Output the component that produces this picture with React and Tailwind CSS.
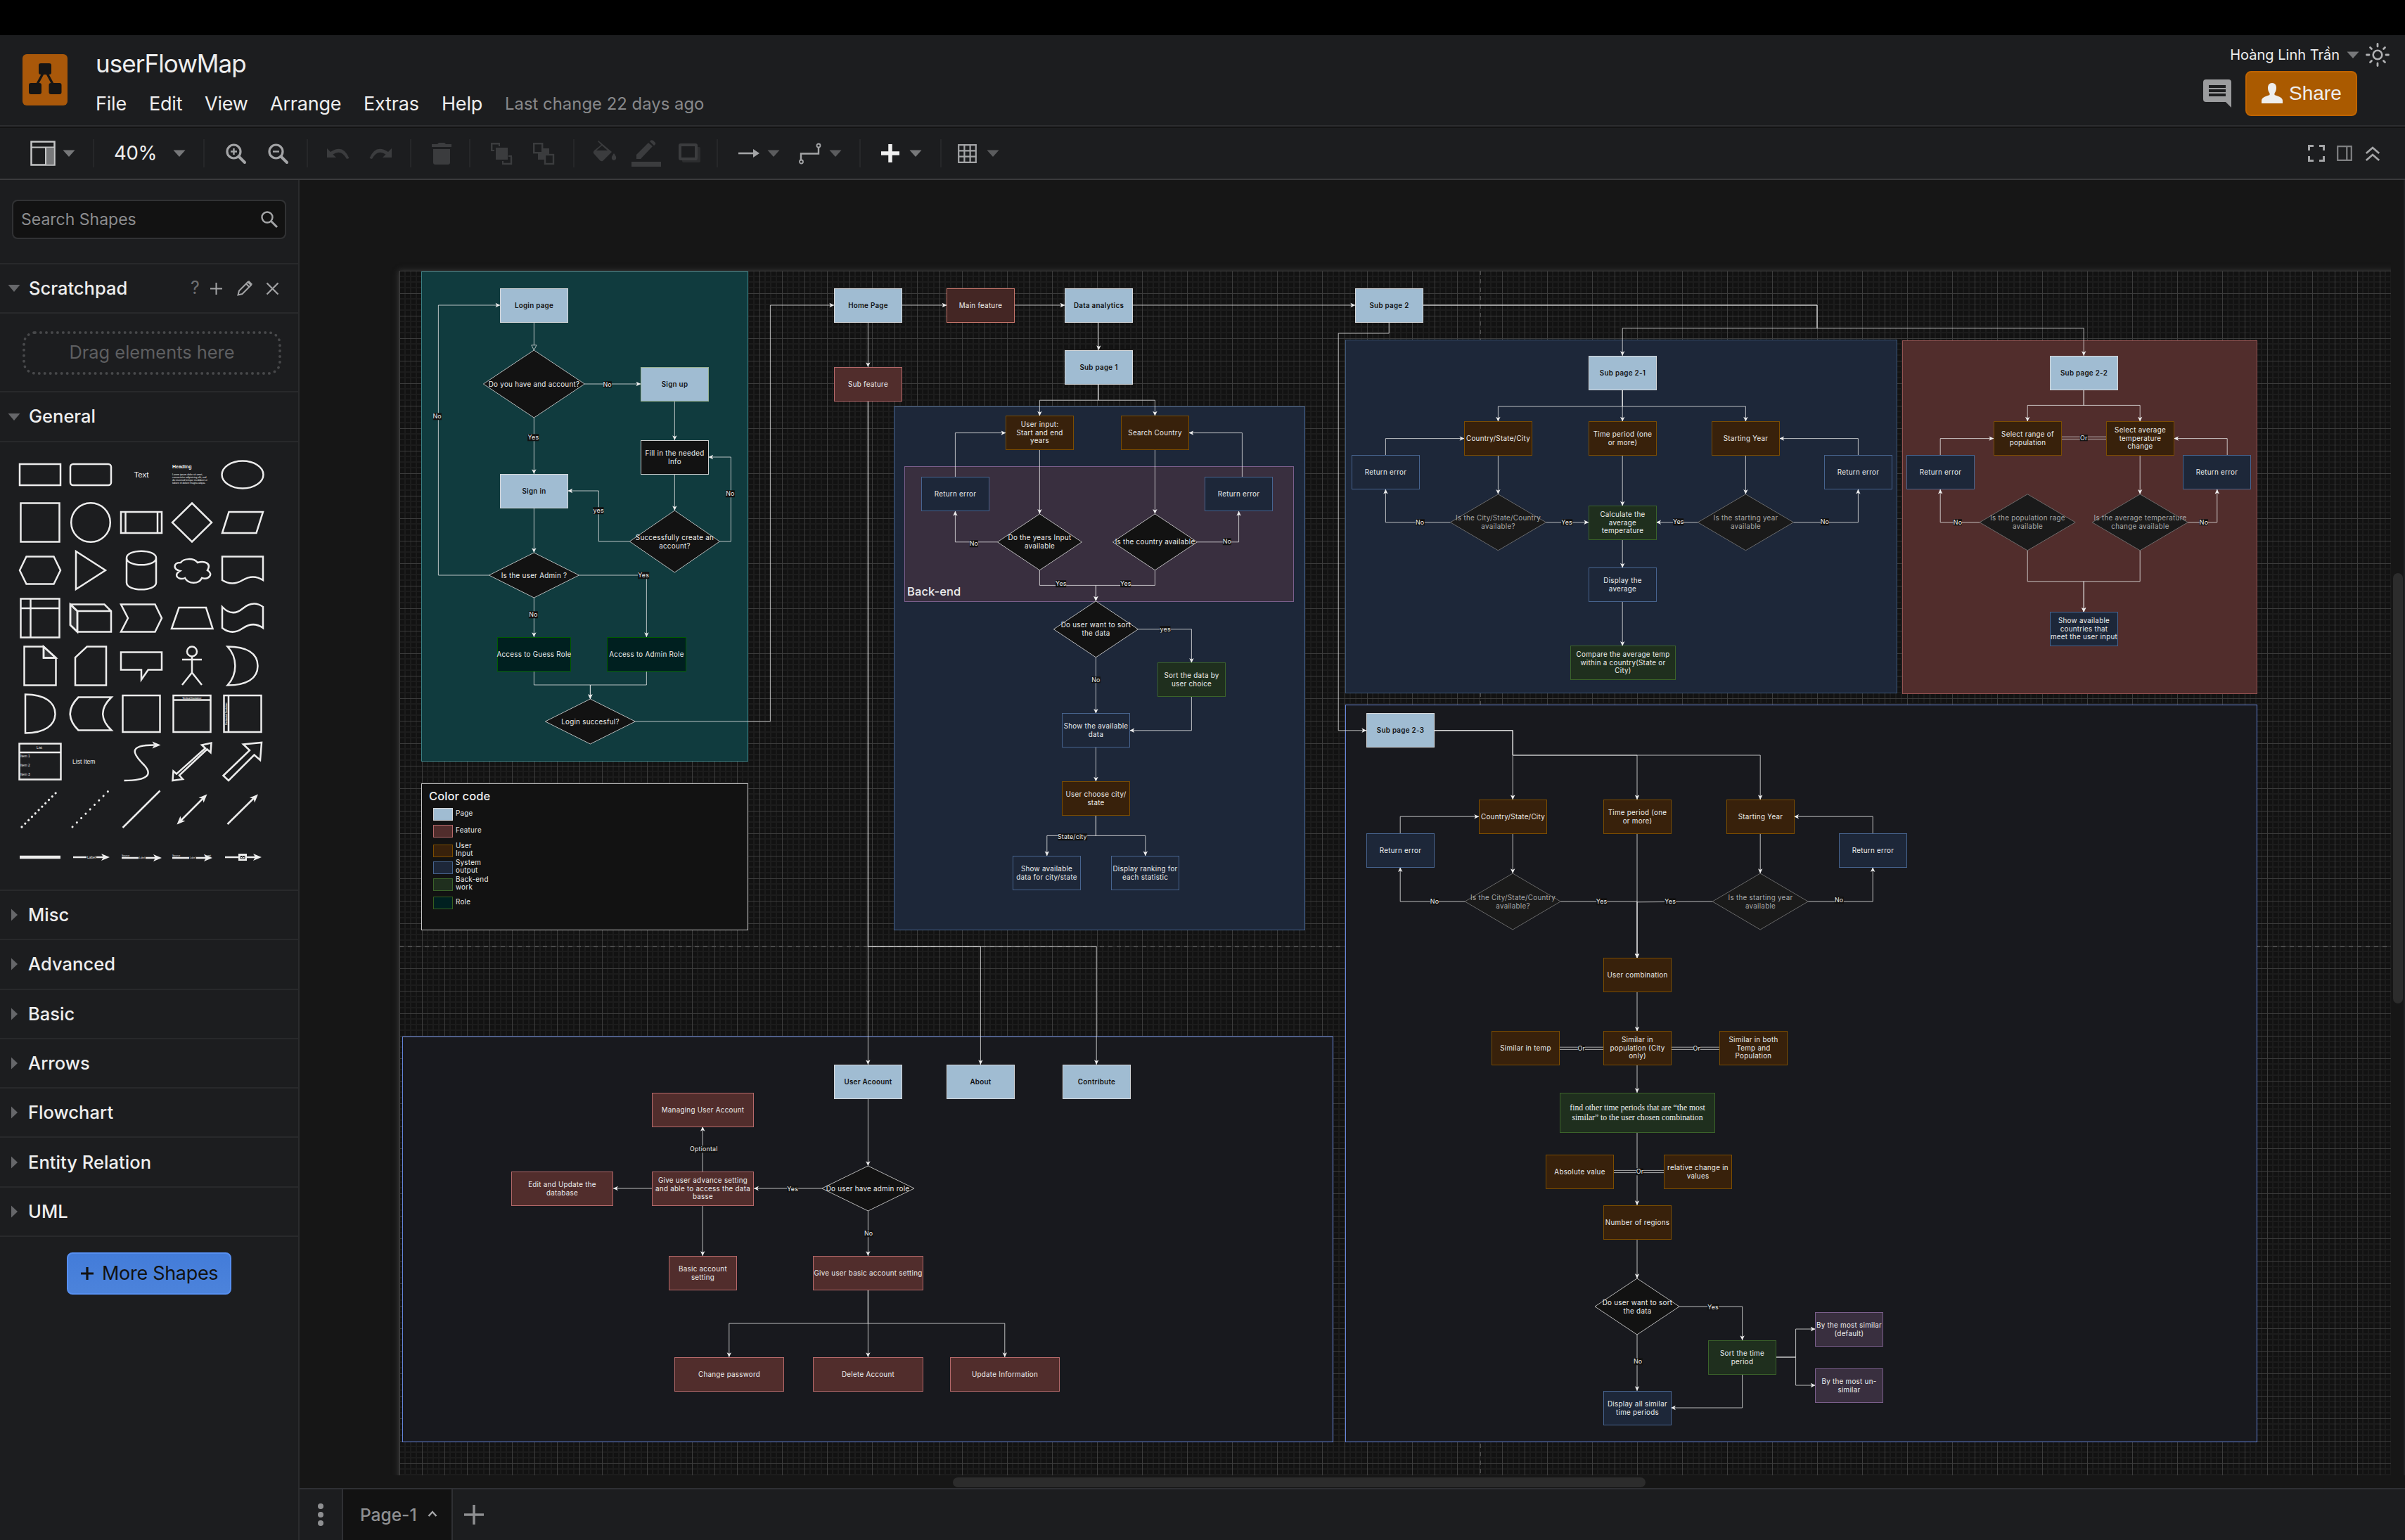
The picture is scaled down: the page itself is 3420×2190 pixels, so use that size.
import React from "react";

const U = 0.8;

const KIND = {
  page: "bg-[#a0bcd2] border-[#d6d9dc] text-[#121212] font-semibold",
  pageGreen: "bg-[#a0bcd2] border-[#97b08f] text-[#121212] font-semibold",
  feature: "bg-[#512d2c] border-[#b5696a] text-[#eeeeee]",
  main: "bg-[#442624] border-[#c9776c] text-[#eeeeee]",
  input: "bg-[#38210b] border-[#7c4d00] text-[#eeeeee]",
  system: "bg-[#1d2739] border-[#47648f] text-[#eeeeee]",
  backend: "bg-[#1f2f1e] border-[#3b632a] text-[#eeeeee]",
  serif: "bg-[#1f2f1e] border-[#3b632a] text-[#eeeeee]",
  role: "bg-[#002020] border-[#005c00] text-[#eeeeee]",
  purple: "bg-[#392f3f] border-[#7b5f8c] text-[#eeeeee]",
  plain: "bg-[#121212] border-[#d0d0d0] text-[#eeeeee]",
};

const SANS_LABEL = "text-[9.8px] leading-[11.5px] tracking-[0.28px]";
const SERIF_LABEL = "font-['Liberation_Serif',serif] text-[11.7px] leading-[14px]";

const PANELS = [
  [39.2, 0, 580, 870, "bg-[#103b3e] border-[#3c8286]"],
  [39.2, 910, 580, 260, "bg-[#121212] border-[#c8c8c8]"],
  [879.5, 240, 730, 930, "bg-[#1d2739] border-[#47648f]"],
  [898, 347, 691, 240, "bg-[#392f3f] border-[#7b5f8c]"],
  [1682, 122, 980, 627, "bg-[#1d2739] border-[#3c5679]"],
  [2672, 123, 630, 628, "bg-[#512d2c] border-[#955453]"],
  [1682, 771, 1620, 1310, "bg-[#18191e] border-[#6585dc]"],
  [6, 1360, 1654, 720, "bg-[#18191e] border-[#6585dc]"],
];

const BOXES = [
  [179.2, 30, 120, 60, "page", "Login page"],
  [429.2, 170, 120, 60, "pageGreen", "Sign up"],
  [429.2, 300, 120, 60, "plain", "Fill in the needed\nInfo"],
  [179.2, 360, 120, 60, "page", "Sign in"],
  [174.2, 650, 130, 60, "role", "Access to Guess Role"],
  [369.2, 650, 140, 60, "role", "Access to Admin Role"],
  [773, 30, 120, 60, "page", "Home Page"],
  [973, 30, 120, 60, "main", "Main feature"],
  [1183, 30, 120, 60, "page", "Data analytics"],
  [1183, 140, 120, 60, "page", "Sub page 1"],
  [773, 170, 120, 60, "feature", "Sub feature"],
  [1078, 257, 120, 60, "input", "User input:\nStart and end\nyears"],
  [1283, 257, 120, 60, "input", "Search Country"],
  [928, 366, 120, 60, "system", "Return error"],
  [1432, 366, 120, 60, "system", "Return error"],
  [1348, 696, 120, 60, "backend", "Sort the data by\nuser choice"],
  [1178, 786, 120, 60, "system", "Show the available\ndata"],
  [1178, 907, 120, 60, "input", "User choose city/\nstate"],
  [1091, 1039, 120, 60, "system", "Show available\ndata for city/state"],
  [1266, 1039, 120, 60, "system", "Display ranking for\neach statistic"],
  [1699, 30, 120, 60, "page", "Sub page 2"],
  [2114, 150, 120, 60, "page", "Sub page 2-1"],
  [1893, 267, 120, 60, "input", "Country/State/City"],
  [2114, 267, 120, 60, "input", "Time period (one\nor more)"],
  [2333, 267, 120, 60, "input", "Starting Year"],
  [1693, 327, 120, 60, "system", "Return error"],
  [2533, 327, 120, 60, "system", "Return error"],
  [2114, 417, 120, 60, "backend", "Calculate the\naverage\ntemperature"],
  [2114, 527, 120, 60, "system", "Display the\naverage"],
  [2081.5, 666, 186, 60, "backend", "Compare the average temp\nwithin a country(State or\nCity)"],
  [2934, 150, 120, 60, "page", "Sub page 2-2"],
  [2834, 267, 120, 60, "input", "Select range of\npopulation"],
  [3034, 267, 120, 60, "input", "Select average\ntemperature\nchange"],
  [2679, 327, 120, 60, "system", "Return error"],
  [3171, 327, 120, 60, "system", "Return error"],
  [2934, 606, 120, 60, "system", "Show available\ncountries that\nmeet the user input"],
  [1719, 786, 120, 60, "page", "Sub page 2-3"],
  [1919, 939, 120, 60, "input", "Country/State/City"],
  [2140, 939, 120, 60, "input", "Time period (one\nor more)"],
  [2359, 939, 120, 60, "input", "Starting Year"],
  [1719, 999, 120, 60, "system", "Return error"],
  [2559, 999, 120, 60, "system", "Return error"],
  [2140, 1221, 120, 60, "input", "User combination"],
  [1942, 1351, 120, 60, "input", "Similar in temp"],
  [2140, 1351, 120, 60, "input", "Similar in\npopulation (City\nonly)"],
  [2347, 1351, 120, 60, "input", "Similar in both\nTemp and\nPopulation"],
  [2063, 1460, 275, 70, "serif", "find other time periods that are “the most\nsimilar” to the user chosen combination"],
  [2038, 1570, 120, 60, "input", "Absolute value"],
  [2248, 1570, 120, 60, "input", "relative change in\nvalues"],
  [2140, 1660, 120, 60, "input", "Number of regions"],
  [2327, 1900, 120, 60, "backend", "Sort the time\nperiod"],
  [2517, 1850, 120, 60, "purple", "By the most similar\n(default)"],
  [2517, 1950, 120, 60, "purple", "By the most un-\nsimilar"],
  [2140, 1990, 120, 60, "system", "Display all similar\ntime periods"],
  [773, 1410, 120, 60, "page", "User Acoount"],
  [973, 1410, 120, 60, "page", "About"],
  [1179, 1410, 120, 60, "page", "Contribute"],
  [449, 1460, 180, 60, "feature", "Managing User Account"],
  [199, 1600, 180, 60, "feature", "Edit and Update the\ndatabase"],
  [449, 1600, 180, 60, "feature", "Give user advance setting\nand able to access the data\nbasse"],
  [479, 1750, 120, 60, "feature", "Basic account\nsetting"],
  [736, 1750, 195, 60, "feature", "Give user basic account setting"],
  [489, 1930, 194, 60, "feature", "Change password"],
  [736, 1930, 195, 60, "feature", "Delete Account"],
  [979, 1930, 194, 60, "feature", "Update Information"],
];

// [x, y, w, h, text, dimmed]
const DIAMONDS = [
  [149.2, 140, 180, 120, "Do you have and account?"],
  [409.2, 425, 160, 110, "Successfully create an\naccount?"],
  [159.2, 500, 160, 80, "Is the user Admin ?"],
  [259.2, 760, 160, 80, "Login succesful?"],
  [1063, 431, 150, 100, "Do the years Input\navailable"],
  [1268, 431, 150, 100, "Is the country available"],
  [1163, 586, 150, 100, "Do user want to sort\nthe data"],
  [1868, 396, 170, 100, "Is the City/State/Country\navailable?", true],
  [2308, 396, 170, 100, "Is the starting year\navailable", true],
  [2809, 396, 170, 100, "Is the population rage\navailable", true],
  [3009, 396, 170, 100, "Is the average temperature\nchange available", true],
  [1894, 1070, 170, 100, "Is the City/State/Country\navailable?", true],
  [2334, 1070, 170, 100, "Is the starting year\navailable", true],
  [2125, 1790, 150, 100, "Do user want to sort\nthe data"],
  [751, 1590, 164, 80, "Do user have admin role"],
];

const LOGIN_ARROWS = [
  "330,200 430,200", "490,230 490,300", "240,260 240,360", "490,360 490,425",
  "570,480 590,480 590,330 550,330", "410,480 355,480 355,390 300,390", "240,420 240,500",
  "160,540 70,540 70,60 180,60", "320,540 440,540 440,650", "240,580 240,650",
  "240,710 240,735 340,735 340,760", "440,710 440,735 340,735 340,760",
  "420,800 660,800 660,60 773.5,60",
];

const ARROWS = [
  "893,60 973,60", "1093,60 1183,60", "833,90 833,170", "1243,90 1243,140",
  "1243,200 1243,229 1138,229 1138,257", "1243,200 1243,229 1343,229 1343,257",
  "1303,60 1699,60", "1138,317 1138,431", "1343,317 1343,431",
  "988,366 988,287 1078,287", "1498,366 1498,287 1403,287",
  "1063,481 988,481 988,426", "1418,481 1492,481 1492,426",
  "1138,531 1138,558 1238,558 1238,586", "1343,531 1343,558 1238,558 1238,586",
  "1313,636 1408,636 1408,696", "1238,686 1238,786", "1408,756 1408,816 1298,816",
  "1238,846 1238,907", "1238,967 1238,1003 1151,1003 1151,1039", "1238,967 1238,1003 1326,1003 1326,1039",
  "1819,60 2520,60 2520,101 2174,101 2174,150", "1819,60 2520,60 2520,101 2994,101 2994,150",
  "1759,90 1759,110 1669,110 1669,816 1719,816",
  "2174,210 2174,240 1953,240 1953,267", "2174,210 2174,267", "2174,210 2174,240 2393,240 2393,267",
  "1753,327 1753,297 1893,297", "2593,327 2593,297 2453,297",
  "1868,446 1753,446 1753,387", "2038,446 2114,446", "2308,446 2234,446", "2478,446 2593,446 2593,387",
  "1953,327 1953,396", "2393,327 2393,396", "2174,327 2174,417", "2174,477 2174,527", "2174,587 2174,666",
  "2994,210 2994,238 2894,238 2894,267", "2994,210 2994,238 3094,238 3094,267",
  "2739,327 2739,297 2834,297", "3249,327 3249,297 3154,297",
  "2809,446 2739,446 2739,387", "3179,446 3231,446 3231,387", "3094,327 3094,396",
  "2894,496 2894,551 2994,551 2994,606", "3094,496 3094,551 2994,551 2994,606",
  "1839,816 1979,816 1979,939", "1839,816 1979,816 1979,860 2200,860 2200,939", "1839,816 1979,816 1979,860 2419,860 2419,939",
  "1779,999 1779,969 1919,969", "2619,999 2619,969 2479,969",
  "1894,1120 1779,1120 1779,1059", "2504,1120 2619,1120 2619,1059",
  "1979,999 1979,1070", "2419,999 2419,1070",
  "2064,1120 2200,1120 2200,1221", "2334,1120 2200,1121 2200,1221", "2200,999 2200,1221",
  "2200,1281 2200,1351", "2200,1411 2200,1460", "2200,1530 2200,1660", "2200,1720 2200,1790",
  "2275,1840 2387,1840 2387,1900", "2200,1890 2200,1990", "2387,1960 2387,2020 2260,2020",
  "2447,1930 2482,1930 2482,1880 2517,1880", "2447,1930 2482,1930 2482,1980 2517,1980",
  "833,230 833,1410", "833,230 833,1200 1033,1200 1033,1410", "833,230 833,1200 1239,1200 1239,1410",
  "833,1470 833,1590", "751,1630 630,1630", "449,1630 380,1630", "539,1600 539,1520", "539,1660 539,1750",
  "833,1670 833,1750", "833,1810 833,1930", "833,1810 833,1870 586,1870 586,1930", "833,1810 833,1870 1076,1870 1076,1930",
];

const DOUBLE_LINKS = [
  [2954, 3034, 296], [2061, 2140, 1381], [2260, 2346, 1381], [2158, 2248, 1600],
];

const LABELS = [
  [369.5, 201, "No"], [238, 295, "Yes"], [588, 395, "No"], [354, 425, "yes"], [67, 258, "No"], [434, 540, "Yes"], [238, 610, "No"],
  [1021, 484, "No"], [1471, 480, "No"], [1176, 555, "Yes"], [1291, 555, "Yes"], [1361.5, 636, "yes"], [1238, 726, "No"], [1196, 1005, "State/city"],
  [1814, 446, "No"], [2075, 446, "Yes"], [2273.5, 445, "Yes"], [2533.5, 445, "No"],
  [2994, 296, "Or"], [2770, 446, "No"], [3207.5, 446, "No"],
  [1840, 1120, "No"], [2559, 1118, "No"], [2137, 1120, "Yes"], [2259, 1120, "Yes"], [2101, 1381, "Or"], [2306, 1381, "Or"],
  [2205, 1600, "Or"], [2335, 1841, "Yes"], [2201.5, 1937.5, "No"],
  [699, 1631, "Yes"], [541, 1560, "Optiontal"], [834, 1710, "No"],
];

const LEGEND = [
  [954, "bg-[#a0bcd2] border-[#d6d9dc]", "Page"],
  [984, "bg-[#512d2c] border-[#b5696a]", "Feature"],
  [1019, "bg-[#38210b] border-[#7c4d00]", "User\nInput"],
  [1049, "bg-[#1d2739] border-[#47648f]", "System\noutput"],
  [1079, "bg-[#1f2f1e] border-[#3b632a]", "Back-end\nwork"],
  [1112, "bg-[#002020] border-[#35601f]", "Role"],
];

const place = (x, y, w, h) => ({
  left: Math.round(x * U - 0.5),
  top: Math.round(y * U - 0.5),
  width: Math.round(w * U) + 1,
  height: Math.round(h * U) + 1,
});

function Grid() {
  return (
    <svg className="absolute left-0 -top-px" width="2832" height="1713">
      <defs>
        <pattern id="grid" width="32" height="32" patternUnits="userSpaceOnUse">
          <path d="M0 8H32M0 16H32M0 24H32M8 0V32M16 0V32M24 0V32" stroke="#1c1c1c" strokeWidth="2" />
          <path d="M0 .5H32M.5 0V32" stroke="#3c3c3c" strokeWidth="1" />
        </pattern>
      </defs>
      <rect width="2832" height="1713" fill="url(#grid)" />
      <path d="M1537 0V1713M0 961H2832" stroke="#4a4a4a" strokeWidth="2" strokeDasharray="6 6" />
    </svg>
  );
}

function Diagram() {
  return (
    <div className="absolute left-[142px] top-[130px] h-[1712px] w-[2832px]">
      <div className="absolute -left-px -top-px h-[1800px] w-[2900px] border border-[#303030] bg-[#121212] shadow-[0_0_8px_#3a3a3a]" />
      <Grid />
      {PANELS.map(([x, y, w, h, c], i) => (
        <div key={i} className={`absolute border ${c}`} style={place(x, y, w, h)} />
      ))}
      <div className="absolute left-[42px] top-[734px] text-[16.5px] leading-[24px] font-medium tracking-[0.1px]">Color code</div>
      <div className="absolute left-[722px] top-[443px] text-[16.5px] leading-[24px] font-medium tracking-[0.1px]">Back-end</div>
      {LEGEND.map(([y, c, t]) => (
        <React.Fragment key={t}>
          <div className={`absolute border ${c}`} style={place(60.8, y, 34, 21)} />
          <div
            className={`absolute left-[80px] flex h-[24px] -translate-y-1/2 items-center whitespace-pre ${SANS_LABEL}`}
            style={{ top: (y + 9) * U }}
          >
            {t}
          </div>
        </React.Fragment>
      ))}
      <svg className="absolute left-0 top-0" width="2832" height="1712" viewBox="0 0 3540 2140" fill="none">
        <defs>
          <marker id="head" markerUnits="userSpaceOnUse" markerWidth="12" markerHeight="12" refX="9" refY="6" orient="auto">
            <path d="M9 6L0.5 2L2.6 6L0.5 10Z" fill="#eeeeee" />
          </marker>
          <marker id="open" markerUnits="userSpaceOnUse" markerWidth="14" markerHeight="14" refX="11" refY="7" orient="auto">
            <path d="M11 7L2 2.5V11.5Z" fill="#103b3e" stroke="#dddddd" strokeWidth="1" />
          </marker>
        </defs>
        <g transform="translate(-0.8 0)" stroke="#e6e6e6">
          {LOGIN_ARROWS.map((p) => (
            <polyline key={p} points={p} markerEnd="url(#head)" />
          ))}
          <polyline points="240,90 240,140" markerEnd="url(#open)" />
        </g>
        {ARROWS.map((p) => (
          <polyline key={p} points={p} stroke="#e6e6e6" markerEnd="url(#head)" />
        ))}
        {DOUBLE_LINKS.map(([a, b, y]) => (
          <path key={a} d={`M${a} ${y - 2}H${b}M${a} ${y + 2}H${b}`} stroke="#d0d0d0" />
        ))}
        {DIAMONDS.map(([x, y, w, h, , dim], i) => (
          <polygon
            key={i}
            points={`${x},${y + h / 2} ${x + w / 2},${y} ${x + w},${y + h / 2} ${x + w / 2},${y + h}`}
            fill={dim ? "#1a1a1a" : "#121212"}
            stroke={dim ? "#7c7c7c" : "#e0e0e0"}
          />
        ))}
      </svg>
      {BOXES.map(([x, y, w, h, k, t], i) => (
        <div
          key={i}
          className={`absolute flex items-center justify-center whitespace-pre border text-center ${k === "serif" ? SERIF_LABEL : SANS_LABEL} ${KIND[k]}`}
          style={place(x, y, w, h)}
        >
          {t}
        </div>
      ))}
      {DIAMONDS.map(([x, y, w, h, t, dim], i) => (
        <div
          key={i}
          className={`absolute flex items-center justify-center whitespace-pre text-center ${SANS_LABEL} ${dim ? "text-[#a9a9a9]" : "text-[#eeeeee]"}`}
          style={place(x, y, w, h)}
        >
          {t}
        </div>
      ))}
      {LABELS.map(([x, y, t], i) => (
        <div
          key={i}
          className="absolute -translate-x-1/2 -translate-y-1/2 bg-[#121212] text-[8.8px] leading-[9.5px] tracking-[0.2px]"
          style={{ left: x * U, top: y * U }}
        >
          {t}
        </div>
      ))}
    </div>
  );
}

function Caret({ className = "" }) {
  return (
    <svg className={`shrink-0 ${className}`} width="18" height="10" viewBox="0 0 18 10">
      <path d="M0.5 0.5H17.5L9 10Z" fill="#77787a" />
    </svg>
  );
}

const Sep = ({ className = "" }) => <div className={`h-10 w-0.5 shrink-0 bg-[#262729] ${className}`} />;

function Icon({ w, h, className = "", children, color = "#a4a5a7" }) {
  return (
    <svg className={`shrink-0 overflow-visible ${className}`} width={w} height={h} viewBox={`0 0 ${w} ${h}`} fill="none" stroke={color}>
      {children}
    </svg>
  );
}

const DIM = "#3b3c3e";

function Header() {
  return (
    <header className="flex h-[130px] shrink-0 border-b-2 border-[#2c2d2f]">
      <svg className="ml-8 mt-[27px] shrink-0" width="64" height="73" viewBox="0 0 64 73">
        <rect width="64" height="73" rx="6" fill="#a9580a" />
        <path d="M32 22L18 48M32 22L46 48" stroke="#151515" strokeWidth="3.4" />
        <rect x="23" y="13" width="18" height="16" rx="3" fill="#151515" />
        <rect x="9" y="41" width="18" height="16" rx="3" fill="#151515" />
        <rect x="37.5" y="41" width="18" height="16" rx="3" fill="#151515" />
      </svg>
      <div className="ml-10 flex flex-col">
        <div className="mt-[18px] h-11 text-[35px] leading-[44px] tracking-[-0.95px]">userFlowMap</div>
        <nav className="mt-[18px] flex h-9 items-center text-[27px] leading-9 tracking-[-0.2px]">
          <span className="w-[76px]">File</span>
          <span className="w-[79px]">Edit</span>
          <span className="w-[93px]">View</span>
          <span className="w-[133px]">Arrange</span>
          <span className="w-[111px]">Extras</span>
          <span className="w-[90px]">Help</span>
          <span className="whitespace-nowrap text-[23.8px] tracking-[0.05px] text-[#88898b]">Last change 22 days ago</span>
        </nav>
      </div>
      <div className="ml-auto flex flex-col items-end">
        <div className="mr-[22px] mt-2.5 flex h-9 items-center">
          <span className="text-[20px] leading-9">Hoàng Linh Trần</span>
          <Caret className="ml-2.5" />
          <Icon w="34" h="34" className="ml-[9px]" color="#b0b1b3">
            <circle cx="17" cy="17" r="6.3" strokeWidth="2.6" />
            <path strokeWidth="2.8" strokeLinecap="round" d="M17 1.5V5M17 29V32.5M1.5 17H5M29 17H32.5M6.5 6.5L8.5 8.5M25.5 25.5L27.5 27.5M6.5 27.5L8.5 25.5M25.5 8.5L27.5 6.5" />
          </Icon>
        </div>
        <div className="mr-[68px] mt-[5px] flex items-center">
          <svg className="mr-5" width="40" height="40" viewBox="0 0 40 40">
            <path fillRule="evenodd" fill="#9b9c9e" d="M4 0H36Q40 0 40 4V40L32 32H4Q0 32 0 28V4Q0 0 4 0ZM8 8V12H32V8ZM8 14V18H32V14ZM8 20V24H32V20Z" />
          </svg>
          <button className="flex h-16 w-[159px] items-center rounded-lg border-2 border-[#bf6400] bg-[#aa5a00] pl-[21px] font-['Liberation_Sans',sans-serif] text-[28px] text-[#eeeeee]">
            <svg className="mr-[9px]" width="30" height="30" viewBox="0 0 30 30">
              <path fill="#eeeeee" d="M15 0C19 0 21 3 21 7C21 10 20 12.5 18.5 14.5V17C21 18.5 30 19.5 30 25V29H0V25C0 19.5 9 18.5 11.5 17V14.5C10 12.5 9 10 9 7C9 3 11 0 15 0Z" />
            </svg>
            Share
          </button>
        </div>
      </div>
    </header>
  );
}

function Toolbar() {
  return (
    <div className="flex h-[76px] shrink-0 items-center border-b-2 border-t-2 border-b-[#3a3a3c] border-t-[#131313]">
      <Icon w="36" h="36" className="ml-[43px]" color="#c4c5c6">
        <rect x="1.5" y="1.5" width="33" height="33" strokeWidth="2.5" />
        <path d="M1.5 9.5H34.5" strokeWidth="2" />
        <rect x="22.5" y="10" width="11" height="24" fill="#77787a" stroke="none" />
        <path d="M22 9.5V34.5" strokeWidth="2" />
      </Icon>
      <Caret className="ml-2.5" />
      <Sep className="ml-[25px]" />
      <span className="ml-[28px] w-[84px] text-[27.5px] tracking-[-0.3px]">40%</span>
      <Caret />
      <Sep className="ml-[25px]" />
      <Icon w="29" h="29" className="ml-[30px]">
        <circle cx="11.5" cy="11.5" r="9.5" strokeWidth="3.2" />
        <path d="M18.5 18.5L27 27" strokeWidth="4" strokeLinecap="round" />
        <path d="M11.5 7V16M7 11.5H16" strokeWidth="2.4" />
      </Icon>
      <Icon w="29" h="29" className="ml-[31px]">
        <circle cx="11.5" cy="11.5" r="9.5" strokeWidth="3.2" />
        <path d="M18.5 18.5L27 27" strokeWidth="4" strokeLinecap="round" />
        <path d="M7 11.5H16" strokeWidth="2.4" />
      </Icon>
      <Sep className="ml-[26px]" />
      <Icon w="32" h="17" className="ml-[27px]" color={DIM}>
        <path d="M0 1V14H13L8.5 9.5Q20 1.5 28 16L31.5 15Q23 -6 5 6Z" fill={DIM} stroke="none" />
      </Icon>
      <Icon w="32" h="17" className="ml-7" color={DIM}>
        <path d="M32 1V14H19L23.5 9.5Q12 1.5 4 16L0.5 15Q9 -6 27 6Z" fill={DIM} stroke="none" />
      </Icon>
      <Sep className="ml-[26px]" />
      <Icon w="28" h="31" className="ml-[29px]" color={DIM}>
        <path d="M0 2H8L10 0H18L20 2H28V6H0ZM2 9H26V28Q26 31 23 31H5Q2 31 2 28Z" fill={DIM} stroke="none" />
      </Icon>
      <Sep className="ml-[25px]" />
      <Icon w="30" h="31" className="ml-[29px]" color={DIM}>
        <rect x="7" y="7" width="17" height="17" fill={DIM} stroke="none" />
        <path d="M1.2 11V1.2H12M29 20V30H18" strokeWidth="2.4" />
        <path d="M0 11H5M12 0V5M30 19H25M17 31V26" strokeWidth="2" />
      </Icon>
      <Icon w="30" h="31" className="ml-[30px]" color={DIM}>
        <rect x="7" y="8" width="16" height="16" fill={DIM} stroke="none" />
        <rect x="1.2" y="1.2" width="12" height="13" fill="#1c1d1f" strokeWidth="2.4" />
        <rect x="17" y="17" width="12" height="13" fill="#1c1d1f" strokeWidth="2.4" />
      </Icon>
      <Sep className="ml-[27px]" />
      <Icon w="34" h="30" className="-mt-1.5 ml-[26px]" color={DIM}>
        <path d="M8 0L27 16L14 29Q12 30 10 28L1 18Q0 16 2 14L12 6L7 1ZM30 18Q34 23 33 26Q30 30 27 26Q26 23 30 18Z" fill={DIM} stroke="none" />
        <path d="M5 14L13 7L21 14Z" fill="#1c1d1f" stroke="none" />
      </Icon>
      <Icon w="42" h="38" className="ml-[21px]" color={DIM}>
        <path d="M7 21L24 4L30 9L13 27H7ZM26 2Q28 -1 31 1L34 4Q35 6 32 8Z" fill={DIM} stroke="none" />
        <rect x="0" y="31" width="42" height="7" fill={DIM} stroke="none" />
      </Icon>
      <Icon w="32" h="28" className="ml-[25px]" color={DIM}>
        <rect x="5" y="5" width="26" height="22" rx="2" fill="#2c2d2f" stroke="none" />
        <rect x="2" y="2" width="23" height="20" rx="1" strokeWidth="4" fill="#1c1d1f" />
      </Icon>
      <Sep className="ml-[22px]" />
      <Icon w="30" h="12" className="ml-[29px]">
        <path d="M0 6H24" strokeWidth="2.6" />
        <path d="M21 0L30 6L21 12Z" fill="#a4a5a7" stroke="none" />
      </Icon>
      <Caret className="ml-[11px] opacity-70" />
      <Icon w="32" h="31" className="ml-[27px]">
        <path d="M3 24V15.5H28V7" strokeWidth="2.4" />
        <circle cx="3.5" cy="27" r="2.5" strokeWidth="1.8" />
        <circle cx="28" cy="4" r="2.5" strokeWidth="1.8" />
      </Icon>
      <Caret className="ml-[11px] opacity-70" />
      <Sep className="ml-[25px]" />
      <Icon w="26" h="26" className="ml-[29px]" color="#f0f0f0">
        <path d="M13 0V26M0 13H26" strokeWidth="5.5" />
      </Icon>
      <Caret className="ml-[14px]" />
      <Sep className="ml-[26px]" />
      <Icon w="27" h="27" className="ml-[23px]">
        <path d="M1.2 1.2H25.8V25.8H1.2ZM1.2 9.4H25.8M1.2 17.6H25.8M9.4 1.2V25.8M17.6 1.2V25.8" strokeWidth="2.2" />
      </Icon>
      <Caret className="ml-[14px] opacity-70" />
      <div className="ml-auto mr-9 flex items-center">
        <Icon w="24" h="24">
          <path d="M1.5 8V1.5H8M16 1.5H22.5V8M22.5 16V22.5H16M8 22.5H1.5V16" strokeWidth="3" />
        </Icon>
        <Icon w="22" h="22" className="ml-[17px]" color="#808183">
          <path d="M1.2 1.2H20.8V20.8H1.2ZM14.3 1.2V20.8" strokeWidth="2.2" />
        </Icon>
        <Icon w="20" h="21" className="ml-[19px]">
          <path d="M0.8 10L10 2L19.2 10M0.8 20L10 12L19.2 20" strokeWidth="2.8" />
        </Icon>
      </div>
    </div>
  );
}

const T = ({ x, y, s = 3.5, children, ...r }) => (
  <text x={x} y={y} fontSize={s} fill="#eeeeee" stroke="none" fontFamily="Liberation Sans, sans-serif" {...r}>
    {children}
  </text>
);
const Head = ({ x, y, a = 0 }) => (
  <path transform={`translate(${x} ${y}) rotate(${a})`} d="M0 0L-12 -5L-9 0L-12 5Z" fill="#eeeeee" stroke="none" />
);

const SHAPES = [
  <rect x="-29" y="-15" width="58" height="30" />,
  <rect x="-29" y="-15" width="58" height="30" rx="4" />,
  <T x="0" y="4" s={11.5} textAnchor="middle">Text</T>,
  <g>
    <T x="-28" y="-9" s={7} fontWeight="bold">Heading</T>
    <T x="-28" y="0.8">Lorem ipsum dolor sit amet,</T>
    <T x="-28" y="4.6">consectetur adipisicing elit, sed</T>
    <T x="-28" y="8.6">do eiusmod tempor incididunt ut</T>
    <T x="-28" y="12.8">labore et dolore magna aliqua.</T>
  </g>,
  <ellipse rx="29.5" ry="19.5" />,
  <rect x="-27.5" y="-27.5" width="55" height="55" />,
  <circle r="27.8" />,
  <path d="M-29 -15H29V15H-29ZM-22.5 -15V15M23 -15V15" />,
  <path d="M0 -27.5L28 0L0 27.5L-28 0Z" />,
  <path d="M-29 15L-19.5 -15H29L19.5 15Z" />,
  <path d="M-29 0L-19.5 -19.5H19.5L29 0L19.5 19.5H-19.5Z" />,
  <path d="M-21 -27L21 0L-21 27Z" />,
  <path d="M-21 -17.5C-21 -30.5 21 -30.5 21 -17.5V17.5C21 30.5 -21 30.5 -21 17.5ZM-21 -17.5C-21 -4.5 21 -4.5 21 -17.5" />,
  <path d="M-16 -11C-26 -11 -28 -2 -17 1C-28 7 -18 15 -10 11C-5 20 10 20 14 11C24 14 31 5 22 0C28 -10 18 -14 8 -11C2 -18 -12 -17 -16 -11Z" />,
  <path d="M-29 -19.5H29V14Q15 5 0 14T-29 14Z" />,
  <path d="M-27.5 -27.5H27.5V27.5H-27.5ZM-27.5 -14H27.5M-13.5 -27.5V27.5" />,
  <g>
    <path d="M-29 -19.5L-19 -10V19.5L-29 10Z" fill="#333436" />
    <path d="M-29 -19.5H19.5L29 -10V19.5H-19L-29 10ZM-29 -19.5L-19 -10H29M-19 -10V19.5" />
  </g>,
  <path d="M-29 -19.5H19.5L29 0L19.5 19.5H-29L-19 0Z" />,
  <path d="M-29 15L-18.5 -15H20L29.5 15Z" />,
  <path d="M-29 -16Q-15 -1 0 -13.5T29 -16V14Q15 4 0 14.5T-29 14Z" />,
  <g>
    <path d="M5 -27.5V-11.5H22.5Z" fill="#333436" />
    <path d="M-22.5 -27.5H5L22.5 -11.5V27.5H-22.5ZM5 -27.5V-11.5H22.5" />
  </g>,
  <path d="M-5.3 -27.5H22V27.5H-22V-12Z" />,
  <path d="M-29 -19.5H29V5.5H9.7L0 19.5V5.5H-29Z" />,
  <g>
    <circle cy="-20.5" r="7" />
    <path d="M0 -13.5V9.5M-14 -9H14M-14 27L0 9.5L14 27" />
  </g>,
  <path d="M-21.5 -27.5C6 -27.5 21.5 -18 21.5 0C21.5 18 6 27.5 -21.5 27.5C-7 12 -7 -12 -21.5 -27.5Z" />,
  <path d="M-21 -27.5C7 -27.5 21.5 -16 21.5 0C21.5 16 7 27.5 -21 27.5Z" />,
  <path d="M-17.5 -23.5H29.5Q5 0 29.5 23.5H-17.5Q-41 0 -17.5 -23.5Z" />,
  <rect x="-26.5" y="-26" width="53" height="52" />,
  <g>
    <path d="M-26.5 -26H26.5V26H-26.5ZM-26.5 -19.5H26.5" />
    <T x="0" y="-21.5" s={3.2} fontWeight="bold" textAnchor="middle">Vertical Container</T>
  </g>,
  <g>
    <path d="M-26.5 -26H26.5V26H-26.5ZM-20 -26V26" />
    <T x="0" y="-22" s={3.2} fontWeight="bold" textAnchor="middle" transform="rotate(-90)">Horizontal Container</T>
  </g>,
  <g>
    <path d="M-29.5 -25.5H29.5V25.5H-29.5ZM-29.5 -13H29.5" />
    <T x="-1" y="-18" s={5} textAnchor="middle">List</T>
    <T x="-28" y="-6.5" s={5}>Item 1</T>
    <T x="-28" y="6.5" s={5}>Item 2</T>
    <T x="-28" y="19.5" s={5}>Item 3</T>
  </g>,
  <T x="-26" y="3" s={8.6}>List Item</T>,
  <g>
    <path d="M-24.5 27C10 27 16 18 4 5C-12 -11 -20 -23.5 18 -23.5" />
    <Head x={27.5} y={-23.5} />
  </g>,
  <path d="M-27.5 27L-26.5 13.5L-22 17.5L19 -19L14 -23.5L27.5 -26.5L26.5 -13L21.5 -17.5L-18 19.5L-13 25Z" />,
  <path d="M-27.5 20L10 -16L1 -24.5L27 -27L25 -2L16.5 -9.5L-20 27Z" />,
  <path d="M-26 25L24.5 -25.5" strokeWidth="3.2" strokeDasharray="0.1 6.7" strokeLinecap="round" />,
  <path d="M-26 25L24.5 -25.5" strokeWidth="3" strokeDasharray="0.1 8.8" strokeLinecap="round" />,
  <path d="M-26.5 26L26.5 -26.5" />,
  <g>
    <path d="M-17 17L17 -17" />
    <Head x={21.5} y={-21.5} a={-45} />
    <Head x={-21.5} y={21.5} a={135} />
  </g>,
  <g>
    <path d="M-21.5 21L17 -17" />
    <Head x={22} y={-21.5} a={-45} />
  </g>,
  <path d="M-29 0H29" strokeWidth="4.5" />,
  <g>
    <path d="M-25 0H-6M8 0H19" />
    <T x="1" y="2" s={5} textAnchor="middle">Label</T>
    <Head x={27} y={0} />
  </g>,
  <g>
    <path d="M-28 1H-4M6 1H22" />
    <T x="-28" y="-1">Source</T>
    <T x="1" y="2" textAnchor="middle">Label</T>
    <Head x={29} y={1} />
  </g>,
  <g>
    <path d="M-28 1H-4M6 1H22" />
    <T x="-28" y="-1">Source</T>
    <T x="1" y="2" textAnchor="middle">Label</T>
    <T x="27" y="-1" textAnchor="end">Target</T>
    <Head x={29} y={1} />
  </g>,
  <g>
    <path d="M-25 0H19" />
    <rect x="-6" y="-5" width="12" height="10" fill="#eeeeee" stroke="none" />
    <path d="M-3 -1.5H3V2H-3ZM-3 -1.5L0 0.5L3 -1.5" stroke="#1c1d1f" strokeWidth="1" />
    <Head x={27} y={0} />
  </g>,
];

function Tri({ open }) {
  return (
    <svg className="shrink-0" width="18" height="18" viewBox="0 0 18 18">
      <path d={open ? "M0.5 4H17.5L9 14Z" : "M5 0.5L14 9L5 17.5Z"} fill="#66676a" />
    </svg>
  );
}

function Sidebar() {
  return (
    <aside className="flex w-[426px] shrink-0 flex-col border-r-2 border-[#2a2b2d]">
      <div className="flex h-[120px] flex-col border-b-2 border-[#28292b] px-[17px] pt-7">
        <div className="flex h-14 items-center rounded-lg border-2 border-[#313234] bg-[#121212] pl-[11px] pr-2.5">
          <span className="text-[23px] text-[#8b8c8e]">Search Shapes</span>
          <Icon w="24" h="24" className="ml-auto">
            <circle cx="9" cy="9" r="7.5" strokeWidth="2.4" />
            <path d="M14.5 14.5L23 23" strokeWidth="3" />
          </Icon>
        </div>
      </div>
      <div className="flex h-[70px] items-center border-b-2 border-[#28292b] pl-[11px] text-[25.5px] font-medium">
        <Tri open />
        <span className="ml-3 w-[230px]">Scratchpad</span>
        <span className="w-7 text-[25px] font-normal text-[#6e6f71]">?</span>
        <Icon w="17" h="17">
          <path d="M8.5 0V17M0 8.5H17" strokeWidth="2" />
        </Icon>
        <Icon w="22" h="22" className="ml-[21px]">
          <path d="M1.5 20.5L3 14.5L15.5 2L20 6.5L7.5 19ZM13 4.5L17.5 9" strokeWidth="2" />
          <path d="M15.5 2L17 0.5L21.5 5L20 6.5Z" fill="#a4a5a7" />
        </Icon>
        <Icon w="17" h="17" className="ml-5">
          <path d="M0.5 0.5L16.5 16.5M16.5 0.5L0.5 16.5" strokeWidth="2.2" />
        </Icon>
      </div>
      <div className="flex h-[112px] items-center justify-center border-b-2 border-[#28292b]">
        <div className="ml-2 mt-px flex h-[62px] w-[368px] items-center justify-center rounded-[18px] border-4 border-dotted border-[#47484a] text-[25.4px] text-[#5e5f61]">
          Drag elements here
        </div>
      </div>
      <div className="flex h-[71px] items-center border-b-2 border-[#28292b] pl-[11px] text-[25.5px] font-medium">
        <Tri open />
        <span className="ml-3">General</span>
      </div>
      <div className="h-[638px] border-b-2 border-[#28292b] pl-[21px] pt-3">
        <div className="grid grid-cols-[repeat(5,72px)] auto-rows-[68px]">
          {SHAPES.map((s, i) => (
            <svg key={i} width="72" height="68" viewBox="-36 -34 72 68" fill="none" stroke="#ececec" strokeWidth="2.5">
              {s}
            </svg>
          ))}
        </div>
      </div>
      {["Misc", "Advanced", "Basic", "Arrows", "Flowchart", "Entity Relation", "UML"].map((t) => (
        <div key={t} className="flex h-[70.3px] shrink-0 items-center border-b-2 border-[#28292b] pl-[11px] text-[25.5px] font-medium">
          <Tri />
          <span className="ml-[11px] tracking-[0.05px]">{t}</span>
        </div>
      ))}
      <button className="ml-[95px] mt-[22px] flex h-[60px] w-[234px] items-center rounded-lg border-2 border-[#568ff0] bg-linear-to-b from-[#437cd9] to-[#4c83db] pl-[18px] text-[27px] tracking-[-0.3px] text-[#121212]">
        <Icon w="18" h="18" className="mr-3" color="#121212">
          <path d="M9 0V18M0 9H18" strokeWidth="3.2" />
        </Icon>
        More Shapes
      </button>
    </aside>
  );
}

function Footer() {
  return (
    <footer className="flex h-[74px] shrink-0 items-center border-t-2 border-[#2f3034] bg-[#1c1d1f]">
      <svg width="60" height="72" viewBox="0 0 60 72" fill="#8f9092">
        <circle cx="30" cy="24" r="4" />
        <circle cx="30" cy="36" r="4" />
        <circle cx="30" cy="48" r="4" />
      </svg>
      <div className="flex h-full w-[158px] items-center border-x-2 border-[#2f3034] bg-[#121212] pl-[24px] text-[24.5px] font-medium text-[#8f9092]">
        <span className="w-[96px]">Page-1</span>
        <Icon w="14" h="9" className="-mt-1">
          <path d="M1.5 8L7 2L12.5 8" strokeWidth="2.5" />
        </Icon>
      </div>
      <Icon w="28" h="28" className="ml-4" color="#8f9092">
        <path d="M14 0V28M0 14H28" strokeWidth="3.5" />
      </Icon>
    </footer>
  );
}

export default function App() {
  return (
    <div className="flex h-[2190px] w-[3420px] flex-col overflow-hidden bg-[#1c1d1f] font-['Inter',sans-serif] text-[#eeeeee]">
      <div className="h-[50px] shrink-0 bg-black" />
      <Header />
      <Toolbar />
      <div className="flex min-h-0 flex-1">
        <Sidebar />
        <div className="flex min-w-0 flex-1 flex-col">
          <main className="flex min-h-0 flex-1 flex-col bg-[#161616]">
            <div className="flex min-h-0 flex-1">
              <div className="relative h-[1842px] w-[2974px] shrink-0 overflow-hidden">
                <Diagram />
              </div>
              <div className="flex w-5 shrink-0 flex-col border-r-2 border-[#222224] pl-[3px] pt-[559px]">
                <div className="h-[612px] w-[14px] rounded-full bg-[#2c2c2c]" />
              </div>
            </div>
            <div className="flex h-[18px] shrink-0 pl-[929px] pt-[3px]">
              <div className="h-[14px] w-[985px] rounded-full bg-[#2c2c2c]" />
            </div>
          </main>
          <Footer />
        </div>
      </div>
    </div>
  );
}
